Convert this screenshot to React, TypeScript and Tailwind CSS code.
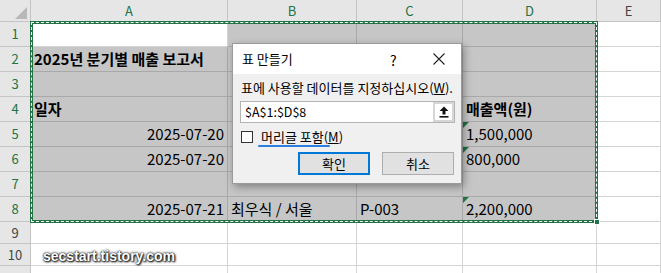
import React from 'react';

type CellData = {
    text?: string;
    bold?: boolean;
    right?: boolean;
    tri?: boolean;
    white?: boolean;
};

const colWidths = ['w-[197px]', 'w-[129px]', 'w-[106px]', 'w-[134px]'];
const colNames = ['A', 'B', 'C', 'D'];

// B4~C6 sit under the dialog, so they are left empty here
const rows: CellData[][] = [
    [{ white: true }, {}, {}, {}],
    [{ text: '2025년 분기별 매출 보고서', bold: true }, {}, {}, {}],
    [{}, {}, {}, {}],
    [{ text: '일자', bold: true }, {}, {}, { text: '매출액(원)', bold: true }],
    [{ text: '2025-07-20', right: true }, {}, {}, { text: '1,500,000', tri: true }],
    [{ text: '2025-07-20', right: true }, {}, {}, { text: '800,000', tri: true }],
    [{}, {}, {}, {}],
    [{ text: '2025-07-21', right: true }, { text: '최우식 / 서울' }, { text: 'P-003' }, { text: '2,200,000', tri: true }],
];

const RowHeader = ({ n, selected, tall }: { n?: number; selected: boolean; tall: boolean }) => (
    <div className={`w-[31px] ${tall ? 'h-[25px]' : 'h-[22px]'} shrink-0 bg-[#e6e6e6] border-r border-b border-[#c4c4c4] flex items-center justify-center text-[13px] ${selected ? 'text-[#217346]' : 'text-[#444]'}`}>
        {n}
    </div>
);

const Cell = ({ c, w }: { c: CellData; w: string }) => (
    <div className={`relative ${w} h-[25px] shrink-0 border-r border-b ${c.white ? 'bg-white border-[#d4d4d4]' : 'bg-[#c6c6c6] border-[#a9a9a9]'} flex items-end pb-[2px] px-[3px] text-[15px] leading-[20px] text-black whitespace-nowrap ${c.right ? 'justify-end' : 'justify-start'} ${c.bold ? 'font-bold' : ''}`}>
        {c.tri && <div className="absolute left-0 top-0 w-0 h-0 border-t-[6px] border-r-[6px] border-t-[#217346] border-r-transparent" />}
        <span className="relative">{c.text}</span>
    </div>
);

export default function App() {
    return (
        <div className="relative w-[661px] h-[273px] overflow-hidden bg-white font-['Noto_Sans_CJK_KR','Liberation_Sans',sans-serif]">
            {/* column headers */}
            <div className="flex h-[22px]">
                <div className="relative w-[31px] h-[22px] shrink-0 bg-[#e6e6e6] border-r border-b border-[#c4c4c4]">
                    <svg width="31" height="22" className="absolute left-0 top-0">
                        <polygon points="27,7 27,19 15,19" fill="#b8b8b8" />
                    </svg>
                </div>
                {colNames.map((n, i) => (
                    <div key={n} className={`${colWidths[i]} h-[22px] shrink-0 bg-[#e6e6e6] border-r border-b border-[#c4c4c4] flex items-center justify-center text-[13px] text-[#217346]`}>
                        {n}
                    </div>
                ))}
                <div className="w-[64px] h-[22px] shrink-0 bg-[#e6e6e6] border-r border-b border-[#c4c4c4] flex items-center justify-center text-[13px] text-[#444]">E</div>
            </div>

            {rows.map((r, ri) => (
                <div key={ri} className="flex">
                    <RowHeader n={ri + 1} selected tall />
                    {r.map((c, ci) => <Cell key={ci} c={c} w={colWidths[ci]} />)}
                    <div className="w-[64px] h-[25px] shrink-0 bg-white border-r border-b border-[#d4d4d4]" />
                </div>
            ))}

            {[9, 10, 11].map(n => (
                <div key={n} className="flex">
                    <RowHeader n={n < 11 ? n : undefined} selected={false} tall={false} />
                    {colWidths.map((w, i) => (
                        <div key={i} className={`${w} h-[22px] shrink-0 bg-white border-r border-b border-[#d4d4d4]`} />
                    ))}
                    <div className="w-[64px] h-[22px] shrink-0 bg-white border-r border-b border-[#d4d4d4]" />
                </div>
            ))}

            {/* selection marquee */}
            <div className="absolute left-[30px] top-[21px] w-[568px] h-[202px] border-[3px] border-[#217346] pointer-events-none">
                <div className="absolute -inset-[2px] border border-dashed border-white" />
                <div className="absolute -right-[5px] -bottom-[5px] w-[6px] h-[6px] bg-[#217346] border border-white" />
            </div>

            {/* dialog */}
            <div className="absolute left-[232px] top-[43px] w-[230px] h-[141px] border border-[#9a9a9a] bg-[#f0f0f0] shadow-[2px_3px_8px_rgba(0,0,0,0.35)] text-[13px] text-black">
                <div className="relative h-[30px] bg-white flex items-center pl-[9px]">
                    <span>표 만들기</span>
                    <span className="absolute left-[157px] top-[6px] text-[14px]">?</span>
                    <svg width="12" height="12" className="absolute left-[200px] top-[9px]" viewBox="0 0 12 12">
                        <path d="M0.5 0.5 L11.5 11.5 M11.5 0.5 L0.5 11.5" stroke="#222" strokeWidth="1.1" />
                    </svg>
                </div>
                <div className="relative px-[7px]">
                    <div className="h-[27px] flex items-center pl-[1px] whitespace-nowrap">
                        표에 사용할 데이터를 지정하십시오(<span className="underline">W</span>).
                    </div>
                    <div className="flex h-[22px] w-[215px] border border-[#b4b4b4] bg-white">
                        <div className="flex-1 flex items-center pl-[4px] text-[12.5px]">$A$1:$D$8</div>
                        <div className="w-[21px] h-full bg-[#d6d6d6] p-[2px]">
                            <div className="w-full h-full bg-white flex items-center justify-center">
                                <svg width="10" height="12" viewBox="0 0 10 12">
                                    <path d="M5 0.5 L9.5 5 H6.5 V8.5 H3.5 V5 H0.5 Z" fill="#111" />
                                    <rect x="0.5" y="10" width="9" height="1.6" fill="#111" />
                                </svg>
                            </div>
                        </div>
                    </div>
                    <div className="relative flex items-center h-[12px] mt-[8px] pl-[1px]">
                        <div className="w-[12px] h-[12px] border border-[#333] bg-white shrink-0" />
                        <span className="ml-[8px] whitespace-nowrap">머리글 포함(<span className="underline">M</span>)</span>
                        <div className="absolute left-[18px] top-[14px] w-[72px] h-[2px] rounded-full bg-[#2b7fe0]" />
                    </div>
                    <div className="flex justify-end gap-[12px] mt-[9px]">
                        <div className="w-[72px] h-[23px] border-2 border-[#0078d7] bg-[#e1e1e1] flex items-center justify-center">확인</div>
                        <div className="w-[72px] h-[23px] border border-[#adadad] bg-[#e1e1e1] flex items-center justify-center">취소</div>
                    </div>
                </div>
            </div>

            {/* watermark */}
            <div className="absolute left-[43px] top-[246px] text-[14px] font-bold text-white font-['Liberation_Sans',sans-serif] [text-shadow:0_0_3px_#000,1px_1px_2px_#000,0_0_1px_#000]">
                secstart.tistory.com
            </div>
        </div>
    );
}
